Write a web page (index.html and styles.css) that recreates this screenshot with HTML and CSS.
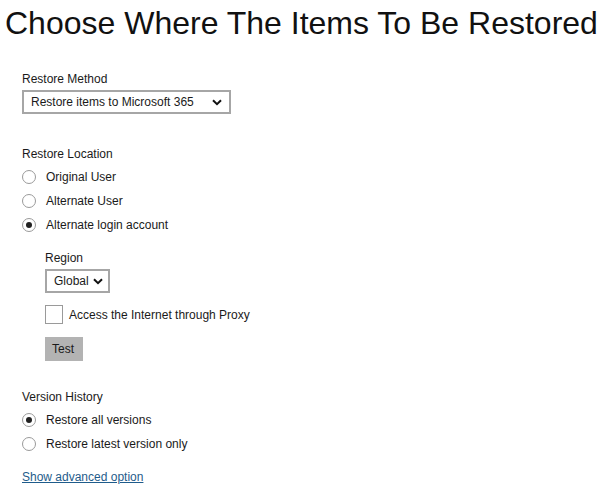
FILE: index.html
```html
<!DOCTYPE html>
<html>
<head>
<meta charset="utf-8">
<link rel="stylesheet" href="styles.css">
</head>
<body>
<h1 class="title">Choose Where The Items To Be Restored</h1>
<div class="content">
  <div class="section">
    <div class="label">Restore Method</div>
    <div class="select wide">
      <span>Restore items to Microsoft 365</span>
      <svg class="chev" width="10" height="7" viewBox="0 0 10 7"><path d="M1 1.2 L5 5.2 L9 1.2" fill="none" stroke="#111" stroke-width="2"/></svg>
    </div>
  </div>

  <div class="section loc">
    <div class="label">Restore Location</div>
    <div class="radio"><span class="dot"></span><span>Original User</span></div>
    <div class="radio"><span class="dot"></span><span>Alternate User</span></div>
    <div class="radio"><span class="dot on"></span><span>Alternate login account</span></div>
    <div class="sub">
      <div class="label">Region</div>
      <div class="select small">
        <span>Global</span>
        <svg class="chev" width="10" height="7" viewBox="0 0 10 7"><path d="M1 1.2 L5 5.2 L9 1.2" fill="none" stroke="#111" stroke-width="2"/></svg>
      </div>
      <div class="check"><span class="box"></span><span>Access the Internet through Proxy</span></div>
      <div class="btn">Test</div>
    </div>
  </div>

  <div class="section ver">
    <div class="label">Version History</div>
    <div class="radio"><span class="dot on"></span><span>Restore all versions</span></div>
    <div class="radio"><span class="dot"></span><span>Restore latest version only</span></div>
  </div>

  <a class="link" href="#">Show advanced option</a>
</div>
</body>
</html>
```
FILE: styles.css
```css
html, body {
  margin: 0;
  padding: 0;
  background: #fff;
}
body {
  font-family: "Liberation Sans", Arial, sans-serif;
  color: #1a1a1a;
  font-size: 12px;
}
.title {
  margin: 0;
  padding: 4px 0 0 5px;
  font-weight: normal;
  font-size: 32px;
  line-height: 38px;
  color: #111;
  white-space: nowrap;
}
.content {
  padding: 29px 0 0 22px;
}
.label {
  line-height: 16px;
  height: 16px;
}
.section {
  display: flex;
  flex-direction: column;
  align-items: flex-start;
}
.select {
  box-sizing: border-box;
  height: 24px;
  border: 2px solid #a6a6a6;
  display: flex;
  align-items: center;
  justify-content: space-between;
  padding: 0 7px 0 7px;
  margin-top: 3px;
  background: #fff;
}
.select.wide { width: 209px; }
.select.small { width: 65px; padding-right: 5px; }
.chev { display: block; }
.loc { margin-top: 32px; }
.radio {
  display: flex;
  align-items: center;
  height: 24px;
}
.loc .label + .radio { margin-top: 3px; }
.dot {
  box-sizing: border-box;
  width: 14px;
  height: 14px;
  border: 1.5px solid #9a9a9a;
  border-radius: 50%;
  margin-right: 10px;
  display: flex;
  align-items: center;
  justify-content: center;
}
.dot.on::after {
  content: "";
  width: 6px;
  height: 6px;
  border-radius: 50%;
  background: #222;
}
.sub {
  padding-left: 23px;
  margin-top: 13px;
  display: flex;
  flex-direction: column;
  align-items: flex-start;
}
.check {
  display: flex;
  align-items: center;
  margin-top: 12px;
  height: 19px;
}
.box {
  box-sizing: border-box;
  width: 18px;
  height: 19px;
  border: 1.5px solid #9a9a9a;
  margin-right: 6px;
}
.btn {
  margin-top: 13px;
  background: #b3b3b3;
  width: 38px;
  height: 24px;
  box-sizing: border-box;
  padding-left: 7px;
  line-height: 24px;
}
.ver { margin-top: 28px; }
.ver .label + .radio { margin-top: 3px; }
.link {
  display: inline-block;
  margin-top: 14px;
  color: #1f5c8b;
  text-decoration: underline;
}
```
